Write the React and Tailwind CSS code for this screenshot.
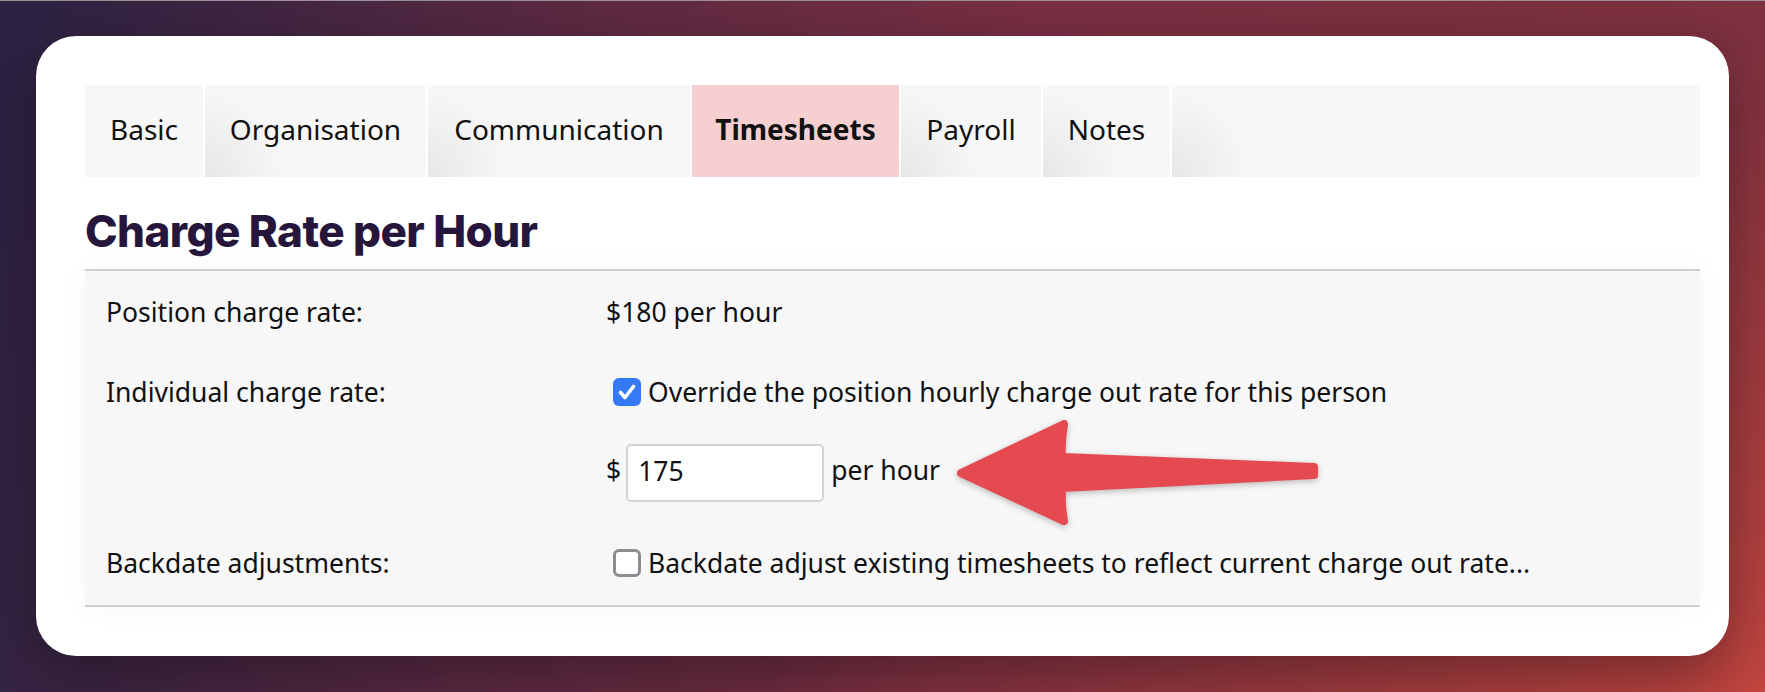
import React from "react";

const tabs = [
    { label: "Basic", w: "w-[118px]", first: true },
    { label: "Organisation", w: "w-[221px]" },
    { label: "Communication", w: "w-[262px]" },
    { label: "Timesheets", w: "w-[207px]", active: true },
    { label: "Payroll", w: "w-[140px]" },
    { label: "Notes", w: "w-[127px]" },
];

const shade =
    "bg-[radial-gradient(ellipse_80px_90px_at_0%_100%,#e7e7e7_0%,#f7f7f7_100%)]";

function Tabs() {
    return (
        <div className="flex h-[92px] gap-[2px] rounded-tl-[4px] overflow-hidden">
            {tabs.map((t) => (
                <div
                    key={t.label}
                    className={`${t.w} shrink-0 flex items-center justify-center pb-[4px] text-[28px] text-[#111] ${
                        t.active
                            ? "bg-[#f6cfd1] font-bold"
                            : t.first
                            ? "bg-[#f7f7f7]"
                            : shade
                    }`}
                >
                    {t.label}
                </div>
            ))}
            <div className={`flex-1 ${shade}`} />
        </div>
    );
}

function CheckedBox() {
    return (
        <div className="w-[28px] h-[28px] rounded-[6px] bg-[#3479f6] flex items-center justify-center shrink-0">
            <svg width="28" height="28" viewBox="0 0 28 28">
                <path
                    d="M7.5 14.5 L12 19.5 L20.5 8.5"
                    fill="none"
                    stroke="#fff"
                    strokeWidth="3.6"
                    strokeLinecap="round"
                    strokeLinejoin="round"
                />
            </svg>
        </div>
    );
}

function EmptyBox() {
    return (
        <div className="w-[28px] h-[28px] rounded-[6px] border-[3.5px] border-[#8c8c93] bg-white shrink-0" />
    );
}

function Arrow() {
    return (
        <svg
            className="absolute left-[950px] top-[410px] drop-shadow-[0_2px_3px_rgba(0,0,0,0.25)]"
            width="380"
            height="124"
            viewBox="0 0 380 124"
        >
            <path
                d="M11 62 L114 13 Q111 30 112 46 L364 56 L364 64 L112 77 Q111 94 114 110 Z"
                fill="#e54a50"
                stroke="#e54a50"
                strokeWidth="8"
                strokeLinejoin="round"
            />
        </svg>
    );
}

export default function App() {
    return (
        <div className="relative w-[1765px] h-[692px] overflow-hidden border-t border-[#9a8e97] bg-[radial-gradient(ellipse_1000px_650px_at_100%_100%,#c4463f_0%,rgba(196,70,63,0)_100%),linear-gradient(100deg,#2a2243_0%,#5c2a42_30%,#7a2f42_55%,#80323f_100%)] font-['Noto_Sans',sans-serif]">
            <div className="absolute left-[36px] top-[35px] w-[1693px] h-[620px] rounded-[40px] bg-white shadow-[0_20px_60px_rgba(20,10,20,0.45)] pt-[49px] pl-[49px] pr-[29px]">
                <Tabs />
                <h1 className="mt-[31px] mb-[15px] h-[46px] leading-[46px] text-[44px] font-extrabold tracking-[-0.6px] text-[#27163c] font-['Inter',sans-serif]">
                    Charge Rate per Hour
                </h1>
                <div className="border-y-2 border-[#cfcfcf] bg-[#f7f7f7] shadow-[0_0_30px_rgba(0,0,0,0.035)] pl-[21px] pt-[23px] pb-[24px] text-[26.5px] leading-[36px] text-[#111]">
                    <div className="flex">
                        <div className="w-[500px]">Position charge rate:</div>
                        <div>$180 per hour</div>
                    </div>
                    <div className="flex mt-[44px]">
                        <div className="w-[500px]">Individual charge rate:</div>
                        <div className="flex items-center gap-[7px] pl-[7px]">
                            <CheckedBox />
                            <span>Override the position hourly charge out rate for this person</span>
                        </div>
                    </div>
                    <div className="flex mt-[34px]">
                        <div className="w-[500px]" />
                        <div className="flex items-start h-[58px]">
                            <span className="mt-[8px]">$</span>
                            <input
                                readOnly
                                value="175"
                                className="ml-[5px] w-[198px] h-[58px] border-2 border-[#d3d3d3] rounded-[5px] bg-white pl-[10px] pb-[4px] text-[26.5px] text-[#111] font-['Noto_Sans',sans-serif] outline-none"
                            />
                            <span className="mt-[8px] ml-[7px]">per hour</span>
                        </div>
                    </div>
                    <div className="flex mt-[43px]">
                        <div className="w-[500px]">Backdate adjustments:</div>
                        <div className="flex items-center gap-[7px] pl-[7px]">
                            <EmptyBox />
                            <span>Backdate adjust existing timesheets to reflect current charge out rate...</span>
                        </div>
                    </div>
                </div>
            </div>
            <Arrow />
        </div>
    );
}
